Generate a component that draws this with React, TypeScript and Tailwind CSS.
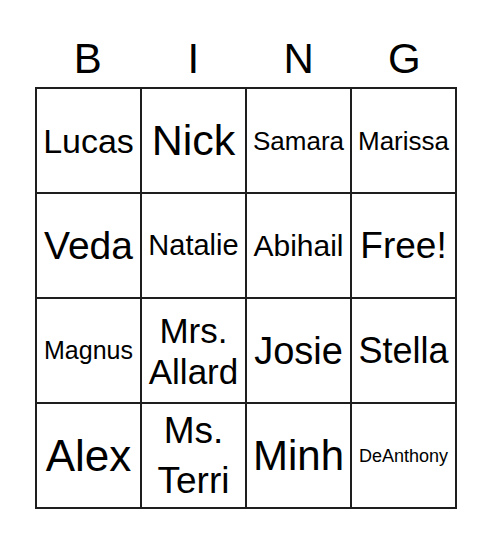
const letters = ['B', 'I', 'N', 'G']

type Cell = { text: string; cls: string }

const cells: Cell[] = [
  { text: 'Lucas', cls: 'text-[34px]' },
  { text: 'Nick', cls: 'text-[43px]' },
  { text: 'Samara', cls: 'text-[26px]' },
  { text: 'Marissa', cls: 'text-[26px]' },
  { text: 'Veda', cls: 'text-[39px]' },
  { text: 'Natalie', cls: 'text-[29px]' },
  { text: 'Abihail', cls: 'text-[30px]' },
  { text: 'Free!', cls: 'text-[37px]' },
  { text: 'Magnus', cls: 'text-[25px]' },
  { text: 'Mrs. Allard', cls: 'text-[35px] leading-[41px]' },
  { text: 'Josie', cls: 'text-[38px]' },
  { text: 'Stella', cls: 'text-[36px]' },
  { text: 'Alex', cls: 'text-[44px]' },
  { text: 'Ms. Terri', cls: 'text-[37px] leading-[50px]' },
  { text: 'Minh', cls: 'text-[42px]' },
  { text: 'DeAnthony', cls: 'text-[18px]' },
]

export default function App() {
  return (
    <div className="w-[492px] h-[544px] bg-white text-black pt-[35px] font-['Liberation_Sans',Arial,sans-serif]">
      <div className="mx-auto w-[422px]">
        {/* header letters */}
        <div className="grid grid-cols-4 h-[52px]">
          {letters.map(l => (
            <div key={l} className="text-center text-[42px] leading-[48px]">{l}</div>
          ))}
        </div>

        {/* card */}
        <div className="grid grid-cols-4 gap-[2px] p-[2px] bg-[#1e1e1e]">
          {cells.map(c => (
            <div key={c.text} className="h-[103px] bg-white flex items-center justify-center text-center">
              <span className={`${c.cls} ${c.cls.includes('leading') ? '' : 'leading-none'}`}>
                {c.text.includes(' ') ? (
                  <>
                    {c.text.split(' ')[0]}
                    <br />
                    {c.text.split(' ')[1]}
                  </>
                ) : c.text}
              </span>
            </div>
          ))}
        </div>
      </div>
    </div>
  )
}
